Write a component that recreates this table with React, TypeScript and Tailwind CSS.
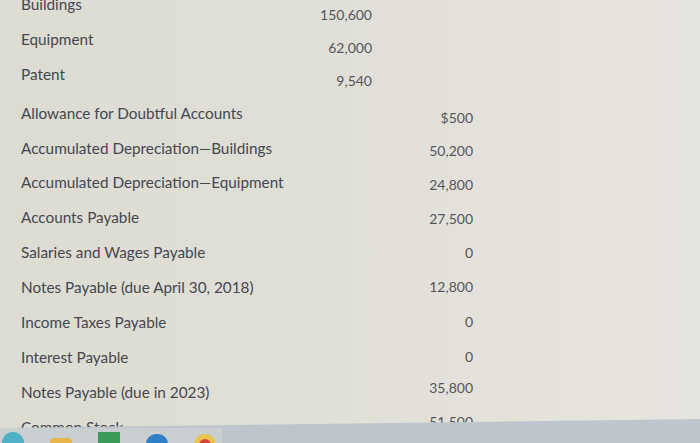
import React from 'react';

interface Row {
  label: string;
  debit?: string;
  credit?: string;
  dy: number; // photo tilt: how far the amount sits below its label
  gap?: boolean;
}

const ROWS: Row[] = [
  { label: 'Buildings', debit: '150,600', dy: 10 },
  { label: 'Equipment', debit: '62,000', dy: 8 },
  { label: 'Patent', debit: '9,540', dy: 6 },
  { label: 'Allowance for Doubtful Accounts', credit: '$500', dy: 4, gap: true },
  { label: 'Accumulated Depreciation\u2014Buildings', credit: '50,200', dy: 2 },
  { label: 'Accumulated Depreciation\u2014Equipment', credit: '24,800', dy: 2 },
  { label: 'Accounts Payable', credit: '27,500', dy: 1 },
  { label: 'Salaries and Wages Payable', credit: '0', dy: 0 },
  { label: 'Notes Payable (due April 30, 2018)', credit: '12,800', dy: -1 },
  { label: 'Income Taxes Payable', credit: '0', dy: -1 },
  { label: 'Interest Payable', credit: '0', dy: -1 },
  { label: 'Notes Payable (due in 2023)', credit: '35,800', dy: -5 },
  { label: 'Common Stock', credit: '51,500', dy: -6 },
];

function TaskbarIcons() {
  return (
    <div className="flex items-start gap-[26px] pl-[2px] pt-[4px]">
      <div className="w-[22px] h-[22px] rounded-full bg-[#4fb0c6]" />
      <div className="w-[22px] h-[16px] mt-[6px] rounded-sm bg-[#e7b54a]" />
      <div className="w-[22px] h-[22px] bg-[#3a9a58]" />
      <div className="w-[22px] h-[22px] mt-[2px] rounded-t-[10px] bg-[#2f7fc8]" />
      <div className="w-[22px] h-[22px] mt-[2px] rounded-full bg-[#d8473a] border-[5px] border-[#e9c44a]" />
    </div>
  );
}

export default function App() {
  return (
    <div
      className="relative w-[700px] h-[443px] overflow-hidden bg-gradient-to-r from-[#dcdcd2] via-[#e1e0d8] to-[#e7e5df]"
      style={{ fontFamily: 'Lato, "Open Sans", sans-serif' }}
    >
      <div className="flex flex-col mt-[-13px]">
        {ROWS.map((row) => (
          <div
            key={row.label}
            className={`flex items-center h-[34.9px] shrink-0 ${row.gap ? 'mt-[4px]' : ''}`}
          >
            <div className="w-[290px] pl-[21px] text-[15.3px] text-[#46464f] whitespace-nowrap">
              {row.label}
            </div>
            <div
              className="w-[82px] text-right text-[14px] text-[#55555f]"
              style={{ transform: `translateY(${row.dy}px)` }}
            >
              {row.debit ?? ''}
            </div>
            <div
              className="w-[101px] text-right text-[14px] text-[#55555f]"
              style={{ transform: `translateY(${row.dy}px)` }}
            >
              {row.credit ?? ''}
            </div>
          </div>
        ))}
      </div>

      {/* windows taskbar poking in at the bottom of the photo */}
      <div className="absolute left-0 right-0 bottom-0 h-[24px] bg-[#bcc6cc] [clip-path:polygon(0_9px,100%_0,100%_100%,0_100%)]">
        <div className="absolute left-0 top-[9px] w-[222px] h-[15px] bg-[#c9cfd0] overflow-hidden">
          <TaskbarIcons />
        </div>
      </div>
    </div>
  );
}
